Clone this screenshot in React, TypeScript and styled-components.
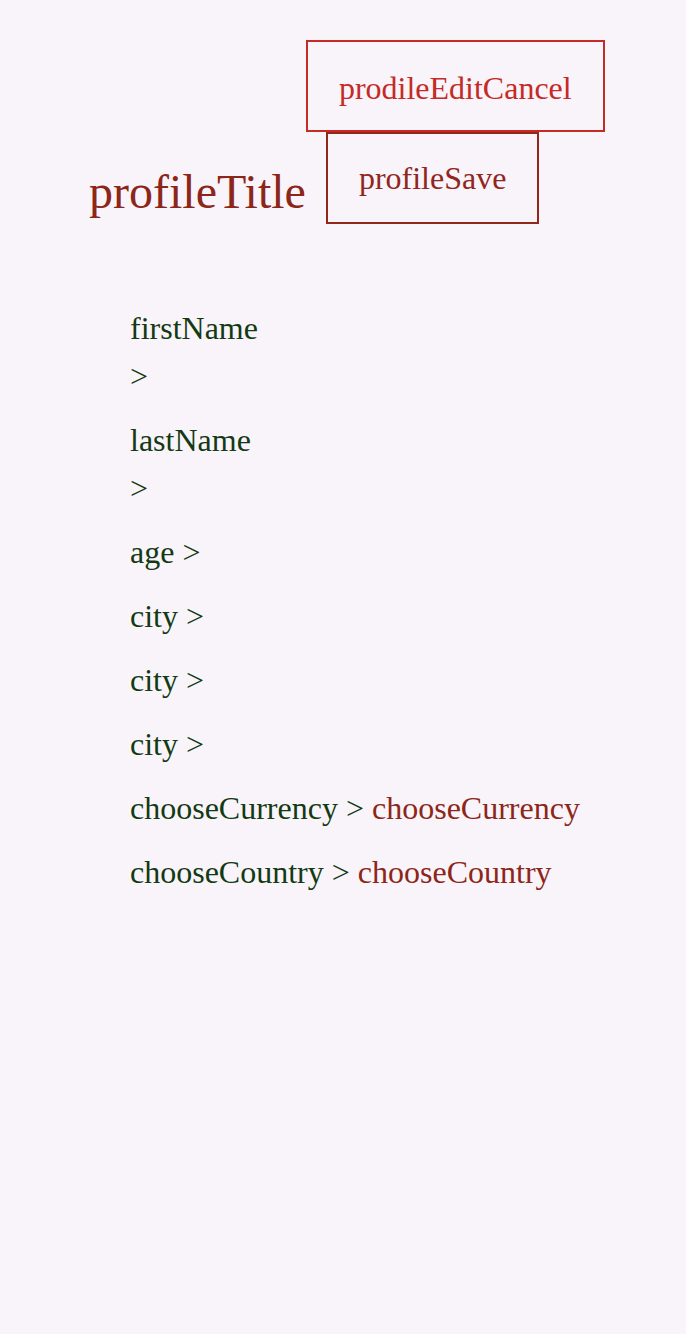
import React from "react";
import styled, { createGlobalStyle } from "styled-components";

const Global = createGlobalStyle`
  html, body {
    margin: 0;
    padding: 0;
    background: #f8f4fa;
  }
  body {
    font-family: "Liberation Serif", "Times New Roman", serif;
    min-height: 1334px;
  }
`;

const Page = styled.div`
  min-height: 1334px;
  background: #f8f4fa;
  font-family: "Liberation Serif", "Times New Roman", serif;
`;

const Header = styled.header`
  display: flex;
  align-items: flex-end;
  padding: 40px 0 0 89px;
`;

const Title = styled.h1`
  margin: 0 0 5px;
  font-size: 48px;
  font-weight: 400;
  line-height: 55px;
  color: #8c2619;
`;

const ButtonStack = styled.div`
  display: flex;
  flex-direction: column;
  align-items: flex-start;
`;

const OutlineButton = styled.button<{ $tone: "cancel" | "save"; $indent?: number }>`
  box-sizing: border-box;
  height: 92px;
  margin: 0 0 0 ${(p) => p.$indent ?? 0}px;
  padding: ${(p) => (p.$tone === "cancel" ? "3px 31px 0" : "0 31px")};
  background: transparent;
  border: 2px solid ${(p) => (p.$tone === "cancel" ? "#c52a25" : "#91261c")};
  color: ${(p) => (p.$tone === "cancel" ? "#c52a25" : "#91261c")};
  font-family: "Liberation Serif", "Times New Roman", serif;
  font-size: 32px;
  line-height: 38px;
  cursor: pointer;
`;

const List = styled.div`
  display: flex;
  flex-direction: column;
  gap: 16px;
  padding: 80px 0 0 130px;
`;

const Row = styled.div<{ $stacked?: boolean }>`
  display: flex;
  flex-direction: ${(p) => (p.$stacked ? "column" : "row")};
  align-items: flex-start;
  column-gap: 8px;
  font-size: 32px;
  line-height: 48px;
  color: #133a13;
  white-space: nowrap;
`;

const Value = styled.span`
  color: #8c2619;
`;

type Field = { label: string; stacked?: boolean; value?: string };

const fields: Field[] = [
  { label: "firstName", stacked: true },
  { label: "lastName", stacked: true },
  { label: "age" },
  { label: "city" },
  { label: "city" },
  { label: "city" },
  { label: "chooseCurrency", value: "chooseCurrency" },
  { label: "chooseCountry", value: "chooseCountry" },
];

export default function App() {
  return (
    <Page>
      <Global />
      <Header>
        <Title>profileTitle</Title>
        <ButtonStack>
          <OutlineButton $tone="cancel">prodileEditCancel</OutlineButton>
          <OutlineButton $tone="save" $indent={20}>
            profileSave
          </OutlineButton>
        </ButtonStack>
      </Header>
      <List>
        {fields.map((f, i) => (
          <Row key={i} $stacked={f.stacked}>
            <span>{f.label}</span>
            <span>&gt;</span>
            {f.value && <Value>{f.value}</Value>}
          </Row>
        ))}
      </List>
    </Page>
  );
}
